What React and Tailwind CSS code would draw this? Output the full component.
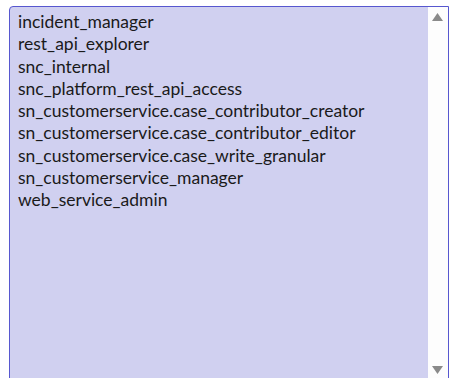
export default function App() {
  const items = [
    "incident_manager",
    "rest_api_explorer",
    "snc_internal",
    "snc_platform_rest_api_access",
    "sn_customerservice.case_contributor_creator",
    "sn_customerservice.case_contributor_editor",
    "sn_customerservice.case_write_granular",
    "sn_customerservice_manager",
    "web_service_admin",
  ];
  return (
    <div className="w-[464px] h-[378px] bg-white overflow-hidden pl-[9px] pt-[6px]">
      <div className="w-[440px] h-[390px] border border-[#5757cf] rounded-tl-[4px] bg-[#d0d0f0] flex overflow-hidden">
        <div
          className="flex-1 pl-[8px] pt-[4px] text-[17.5px] leading-[22.3px] text-[#1a1a1a]"
          style={{ fontFamily: "Lato, 'Open Sans', sans-serif" }}
        >
          {items.map((t) => (
            <div key={t}>{t}</div>
          ))}
        </div>
        <div className="w-[20px] bg-[#fdfdfd] relative">
          <svg className="absolute left-[4px] top-[6px]" width="11" height="8" viewBox="0 0 11 8">
            <polygon points="5.5,0 11,8 0,8" fill="#8a8a8a" />
          </svg>
          <svg className="absolute left-[4px] top-[359px]" width="11" height="8" viewBox="0 0 11 8">
            <polygon points="0,0 11,0 5.5,8" fill="#8a8a8a" />
          </svg>
        </div>
      </div>
    </div>
  );
}
